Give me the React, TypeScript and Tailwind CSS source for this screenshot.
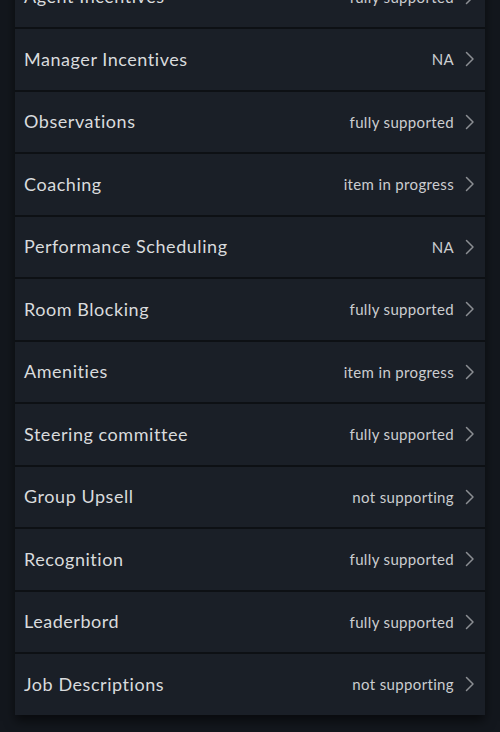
import React from "react";

const items = [
  { title: "Agent Incentives", status: "fully supported" },
  { title: "Manager Incentives", status: "NA" },
  { title: "Observations", status: "fully supported" },
  { title: "Coaching", status: "item in progress" },
  { title: "Performance Scheduling", status: "NA" },
  { title: "Room Blocking", status: "fully supported" },
  { title: "Amenities", status: "item in progress" },
  { title: "Steering committee", status: "fully supported" },
  { title: "Group Upsell", status: "not supporting" },
  { title: "Recognition", status: "fully supported" },
  { title: "Leaderbord", status: "fully supported" },
  { title: "Job Descriptions", status: "not supporting" },
];

const Chevron = () => (
  <svg width="11" height="16" viewBox="0 0 11 16" fill="none" className="shrink-0">
    <path d="M2.5 1.5 L9 8 L2.5 14.5" stroke="#8b8e93" strokeWidth="1.5" strokeLinecap="round" strokeLinejoin="round" />
  </svg>
);

const App = () => {
  return (
    <div className="h-[732px] w-[500px] overflow-hidden bg-[#13171d] font-['Lato','Open_Sans',sans-serif]">
      <div className="mx-[15px] -mt-[33.5px] flex flex-col gap-[2px] bg-[#0d1014] shadow-[0_6px_10px_rgba(0,0,0,0.55)]">
        {items.map((item) => (
          <div
            key={item.title}
            className="flex h-[60.5px] items-center justify-between bg-[#1a1f27] pl-[9px] pr-[10px]"
          >
            <span className="text-[18px] tracking-[0.55px] text-[#d9dbdd]">{item.title}</span>
            <div className="flex items-center gap-[10px]">
              <span className="text-[15px] tracking-[0.35px] text-[#cbcdd0]">{item.status}</span>
              <Chevron />
            </div>
          </div>
        ))}
      </div>
    </div>
  );
};

export default App;
